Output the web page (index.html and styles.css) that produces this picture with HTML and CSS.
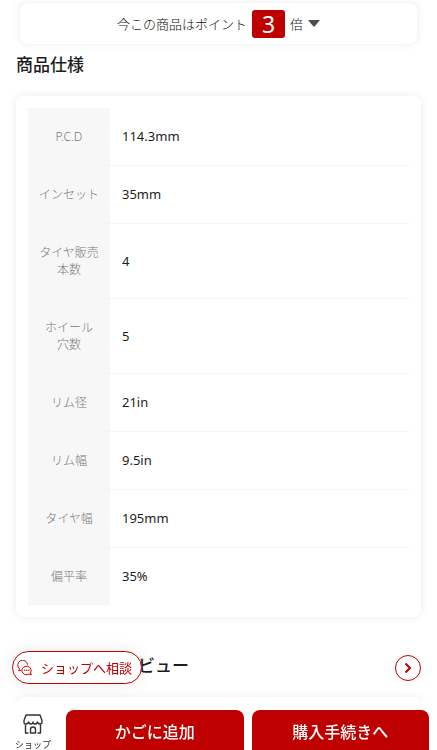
FILE: index.html
```html
<!DOCTYPE html>
<html lang="ja">
<head>
<meta charset="utf-8">
<meta name="viewport" content="width=device-width, initial-scale=1">
<title>商品仕様</title>
<link rel="stylesheet" href="styles.css">
</head>
<body>
<div class="previous-card"></div>
<button class="points" type="button">
  <span>今この商品はポイント</span>
  <strong class="points-rate">3</strong>
  <span>倍</span>
  <svg class="caret" viewBox="0 0 12 7" aria-hidden="true"><path d="M0 0H12L7 6Q6 7 5 6Z" fill="#4d4d4d"/></svg>
</button>
<main class="content">
  <h2 class="heading">商品仕様</h2>
  <section class="card">
    <table class="spec">
      <tbody>
        <tr><th scope="row">P.C.D</th><td>114.3mm</td></tr>
        <tr><th scope="row">インセット</th><td>35mm</td></tr>
        <tr><th scope="row">タイヤ販売<br>本数</th><td>4</td></tr>
        <tr><th scope="row">ホイール<br>穴数</th><td>5</td></tr>
        <tr><th scope="row">リム径</th><td>21in</td></tr>
        <tr><th scope="row">リム幅</th><td>9.5in</td></tr>
        <tr><th scope="row">タイヤ幅</th><td>195mm</td></tr>
        <tr><th scope="row">偏平率</th><td>35%</td></tr>
      </tbody>
    </table>
  </section>
  <div class="review">
    <a class="consult" href="#consult">
      <svg class="chat" viewBox="0 0 18 18" fill="none" stroke="currentColor" stroke-width="1.1" stroke-linecap="round" stroke-linejoin="round" aria-hidden="true">
        <path d="M4.5 11.5L2 12.3L2.8 10A5.6 5.6 0 1 1 12 5"/>
        <path d="M15.3 14.3L16.2 16.5L13.7 15.8A5.3 4.8 0 1 1 15.3 14.3Z"/>
        <path d="M8.700 11.500h.1M11 11.500h.1M13.300 11.500h.1" stroke-width="1.5"/>
      </svg>
      <span>ショップへ相談</span>
    </a>
    <h2 class="review-title">ビュー</h2>
    <a class="more" href="#review" aria-label="レビュー">
      <svg viewBox="0 0 8 12" fill="none" stroke="currentColor" stroke-width="2" aria-hidden="true"><path d="M1.5 1.5L6 6L1.5 10.5"/></svg>
    </a>
  </div>
</main>
<div class="next-card"></div>
<nav class="bar">
  <a class="shop" href="#shop">
    <svg viewBox="0 0 20 20" fill="none" stroke="currentColor" stroke-width="1.4" stroke-linecap="round" stroke-linejoin="round" aria-hidden="true">
      <path d="M3 1H17L19 6.5V8Q19 10 17 10T14.5 8Q14 10 12 10T10 8Q10 10 8 10T5.5 8Q5 10 3 10T1 8V6.5Z"/>
      <path d="M2.5 11V19H5M17.5 11V19H15M7.5 19V15.5Q7.5 13 10 13T12.5 15.5V19Z"/>
    </svg>
    <span>ショップ</span>
  </a>
  <button class="buy" type="button">かごに追加</button>
  <button class="buy" type="button">購入手続きへ</button>
</nav>
</body>
</html>
```
FILE: styles.css
```css
* { box-sizing: border-box; }

body {
  margin: 0;
  min-height: 100vh;
  overflow: hidden;
  background: #fff;
  color: #1d1d1d;
  font-family: "Noto Sans", "Noto Sans CJK JP", sans-serif;
}

a { text-decoration: none; }
button { font-family: inherit; }

.previous-card {
  height: 3px;
  margin: 0 16px;
  border-radius: 0 0 8px 8px;
  box-shadow: 0 0 8px #00000014;
}

.points {
  display: flex;
  align-items: center;
  justify-content: center;
  gap: 5px;
  width: calc(100% - 40px);
  height: 41px;
  margin: 0 20px;
  padding: 0;
  border: 0;
  border-radius: 8px;
  background: #fff;
  box-shadow: 0 0 8px #00000014;
  color: #111;
  font-size: 13px;
  font-weight: 300;
}

.points-rate {
  width: 33px;
  border-radius: 3px;
  background: #bf0000;
  color: #fff;
  font-size: 23px;
  font-weight: 400;
  line-height: 28px;
}

.caret { width: 12px; height: 7px; }

.content { padding: 8px 16px 0; }

.heading, .review-title {
  margin: 0;
  font-size: 17px;
  font-weight: 500;
  line-height: 26px;
}

.card {
  margin-top: 18px;
  padding: 12px;
  border-radius: 8px;
  background: #fff;
  box-shadow: 0 0 8px #00000014;
}

.spec {
  width: 100%;
  border-collapse: collapse;
  line-height: 17px;
}

.spec th {
  width: 82px;
  padding: 20px 0;
  background: #f7f7f7;
  color: #777;
  font-size: 12px;
  font-weight: 300;
}

.spec td {
  padding: 20px 12px;
  font-size: 13px;
}

.spec tr + tr { border-top: 1px solid #f5f5f5; }

.review {
  display: flex;
  align-items: center;
  margin: 34px 0 0 -4px;
}

.consult {
  display: flex;
  align-items: center;
  gap: 8px;
  width: 130px;
  height: 33px;
  margin-right: -4px;
  padding-left: 4px;
  z-index: 1;
  border: 1px solid #bf0000;
  border-radius: 17px;
  background: #fff;
  box-shadow: 0 0 16px #00000018;
  color: #bf0000;
  font-size: 13px;
  white-space: nowrap;
}

.chat { width: 16px; height: 16px; flex: none; }

.review-title { padding-bottom: 4px; }

.more {
  display: grid;
  place-items: center;
  width: 26px;
  height: 26px;
  margin-left: auto;
  border: 1px solid #bf0000;
  border-radius: 50%;
  color: #bf0000;
}

.more svg { width: 8px; height: 12px; }

.next-card {
  height: 40px;
  margin: 13px 16px 0;
  border-radius: 8px;
  box-shadow: 0 0 8px #00000014;
}

.bar {
  position: fixed;
  right: 0;
  bottom: 0;
  left: 0;
  display: flex;
  gap: 8px;
  padding: 9px 8px 0;
  background: #fff;
}

.shop {
  display: flex;
  flex-direction: column;
  align-items: center;
  gap: 4px;
  width: 50px;
  height: 40px;
  padding-top: 4px;
  color: #333;
  font-size: 9px;
  line-height: 14px;
}

.shop svg { width: 20px; height: 20px; flex: none; }

.buy {
  flex: 1;
  height: 40px;
  padding: 2px 0 0;
  border: 0;
  border-radius: 8px 8px 0 0;
  background: #bf0000;
  color: #fff;
  font-size: 16px;
  font-weight: 500;
}
```
